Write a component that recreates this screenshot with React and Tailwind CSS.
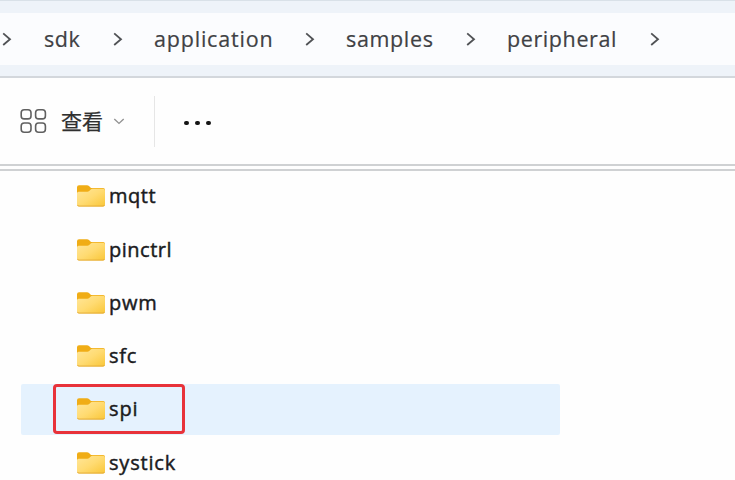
const crumbs = [
  { name: 'sdk', label: 'ml-[32px] w-[69px] tracking-[0.6px]' },
  { name: 'application', label: 'ml-[31px] w-[151px] tracking-[0.8px]' },
  { name: 'samples', label: 'ml-[31px] w-[120px] tracking-[0.65px]' },
  { name: 'peripheral', label: 'ml-[31px] w-[143px] tracking-[0.6px]' },
];

const folders = [
  { name: 'mqtt', tracking: 'tracking-[0.5px]' },
  { name: 'pinctrl', tracking: 'tracking-[0.5px]' },
  { name: 'pwm', tracking: 'tracking-[0.7px]' },
  { name: 'sfc', tracking: 'tracking-[0.7px]' },
  { name: 'spi', tracking: 'tracking-[0.9px]' },
  { name: 'systick', tracking: 'tracking-[0.8px]' },
];

function Chevron() {
  return (
    <svg className="h-[15px] w-[10px] shrink-0" viewBox="0 0 10 15" fill="none" stroke="#505255" strokeWidth="1.8">
      <path d="M1.2 1.4 8 7.2 1.2 13" />
    </svg>
  );
}

function Folder() {
  return (
    <svg className="h-[22px] w-[28px] shrink-0" viewBox="0 0 28 22">
      <defs>
        <linearGradient id="front" x1="0" y1="0" x2="1" y2="1">
          <stop offset="0" stopColor="#ffe69a" />
          <stop offset="0.5" stopColor="#ffdb72" />
          <stop offset="1" stopColor="#f9c637" />
        </linearGradient>
      </defs>
      <path d="M0 2.2Q0 .3 2 .3H10Q11.2 .3 12 1.1L14 3H26Q28 3 28 5V12H0Z" fill="#f0ad16" />
      <path d="M0 8.2Q0 6.7 1.6 6.7H10.3Q11.4 6.7 12.2 6L14 4.2Q14.5 3.8 15.4 3.8H26Q28 3.8 28 5.8V19.3Q28 21.5 26 21.5H2Q0 21.5 0 19.3Z" fill="url(#front)" />
      <path d="M.3 19.8Q.6 21.1 2 21.1H26Q27.4 21.1 27.7 19.8" fill="none" stroke="#e3a936" strokeWidth=".9" />
    </svg>
  );
}

export default function App() {
  return (
    <div className="flex h-[480px] w-[735px] flex-col overflow-hidden bg-[#fefefe] font-['Open_Sans','Noto_Sans_CJK_SC',sans-serif]">
      <header className="flex h-[78px] shrink-0 flex-col border-t border-b-2 border-t-[#d9e1e8] border-b-[#d3d7dc] bg-[#eef3f9] pt-3">
        <nav className="flex h-[52px] items-center bg-[#fbfcfe] pl-[2px] text-[21.5px] leading-[30px] text-[#404144] [-webkit-text-stroke:0.2px_#404144]">
          <Chevron />
          {crumbs.map((c) => (
            <div key={c.name} className="flex items-center">
              <span className={`${c.label} whitespace-nowrap`}>{c.name}</span>
              <Chevron />
            </div>
          ))}
        </nav>
      </header>

      <div className="flex h-[86px] shrink-0 items-center">
        <svg className="ml-5 h-[26px] w-[27px]" viewBox="0 0 27 26" fill="none" stroke="#606060" strokeWidth="1.6">
          <rect x="1.2" y="1.7" width="9.8" height="9.2" rx="3" />
          <rect x="15.6" y="1.7" width="9.8" height="9.2" rx="3" />
          <rect x="1.2" y="15" width="9.8" height="9.2" rx="3" />
          <rect x="15.6" y="15" width="9.8" height="9.2" rx="3" />
        </svg>
        <span className="ml-[14px] w-[42px] text-[21px] leading-[26px] whitespace-nowrap text-[#303030] [-webkit-text-stroke:0.25px_#303030]">查看</span>
        <svg className="ml-[10px] h-[7px] w-[12px]" viewBox="0 0 12 7" fill="none" stroke="#929292" strokeWidth="1.4">
          <path d="M1.3 1 6 5.4 10.7 1" />
        </svg>
        <div className="ml-[29px] h-[51px] w-px bg-[#e6e6e6]" />
        <div className="mt-[3px] ml-[29px] flex gap-[6px]">
          <i className="h-[4px] w-[5px] rounded-[2px] bg-[#151515]" />
          <i className="h-[4px] w-[5px] rounded-[2px] bg-[#151515]" />
          <i className="h-[4px] w-[5px] rounded-[2px] bg-[#151515]" />
        </div>
      </div>
      <div className="h-[7px] shrink-0 border-y-2 border-[#cfd1d3]" />

      <ul className="flex flex-col gap-[2.25px] pt-[0.4px] text-[20px] text-[#1b1b1d] [-webkit-text-stroke:0.45px_#1b1b1d]">
        {folders.map(({ name, tracking }) => {
          const selected = name === 'spi';
          return (
            <li key={name} className={`ml-[21px] flex h-[51px] w-[539px] shrink-0 items-center rounded-[2px] ${selected ? 'bg-[#e5f2fe]' : ''}`}>
              <div className={`-mt-px ml-[32px] flex h-[50px] w-[132px] items-center rounded-[4px] border-[3px] pl-[21px] ${selected ? 'border-[#e8323a]' : 'border-transparent'}`}>
                <Folder />
                <span className={`ml-[4px] leading-[28px] ${tracking}`}>{name}</span>
              </div>
            </li>
          );
        })}
      </ul>
    </div>
  );
}
